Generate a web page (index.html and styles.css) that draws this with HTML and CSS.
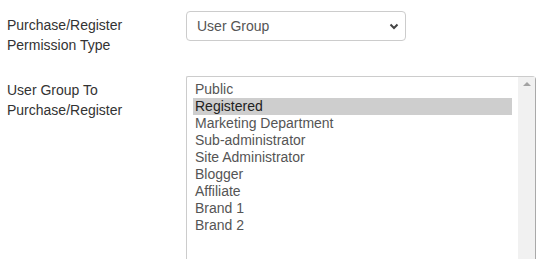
FILE: index.html
```html
<!DOCTYPE html>
<html lang="en">
<head>
  <meta charset="UTF-8">
  <meta name="viewport" content="width=device-width, initial-scale=1.0">
  <title>Purchase Permissions</title>
  <link rel="stylesheet" href="styles.css">
</head>
<body>
  <div class="form">
    <div class="row">
      <label class="label">Purchase/Register<br>Permission Type</label>
      <div class="select">
        <span>User Group</span>
        <svg class="chevron" width="10" height="7" viewBox="0 0 10 7">
          <path d="M1.5 1.5 L5 5 L8.5 1.5" fill="none" stroke="#444" stroke-width="2"/>
        </svg>
      </div>
    </div>

    <div class="row row-list">
      <label class="label">User Group To<br>Purchase/Register</label>
      <div class="listbox">
        <ul class="options">
          <li>Public</li>
          <li class="selected">Registered</li>
          <li>Marketing Department</li>
          <li>Sub-administrator</li>
          <li>Site Administrator</li>
          <li>Blogger</li>
          <li>Affiliate</li>
          <li>Brand 1</li>
          <li>Brand 2</li>
        </ul>
        <div class="scrollbar">
          <span class="arrow-up"></span>
        </div>
      </div>
    </div>
  </div>
</body>
</html>
```

FILE: styles.css
```css
body {
  margin: 0;
  padding: 11px 0 0 7px;
  font-family: "Liberation Sans", Arial, sans-serif;
  font-size: 14px;
  color: #333;
  background: #fff;
}
.row {
  display: flex;
  align-items: flex-start;
}
.row-list {
  margin-top: 21px;
}
.label {
  width: 179px;
  flex-shrink: 0;
  padding-top: 4px;
  line-height: 20px;
}
.select {
  box-sizing: border-box;
  width: 220px;
  height: 30px;
  border: 1px solid #ccc;
  border-radius: 4px;
  padding: 0 6px 0 10px;
  display: flex;
  align-items: center;
  justify-content: space-between;
  color: #555;
}
.chevron {
  margin-top: 1px;
}
.listbox {
  box-sizing: border-box;
  width: 350px;
  height: 183px;
  border: 1px solid #ccc;
  border-bottom: 0;
  border-right-color: #a9a9a9;
  border-radius: 2px 4px 0 0;
  display: flex;
}
.options {
  flex: 1;
  list-style: none;
  margin: 0;
  padding: 4px 6px 0 6px;
}
.options li {
  padding: 0 2px 1px;
  line-height: 16px;
  color: #555;
}
.options li.selected {
  background: #cecece;
  color: #222;
}
.scrollbar {
  width: 17px;
  background: #f1f1f1;
  display: flex;
  justify-content: center;
  padding-top: 5px;
  box-sizing: border-box;
}
.arrow-up {
  width: 0;
  height: 0;
  border-left: 4px solid transparent;
  border-right: 4px solid transparent;
  border-bottom: 4px solid #a3a3a3;
}
```
